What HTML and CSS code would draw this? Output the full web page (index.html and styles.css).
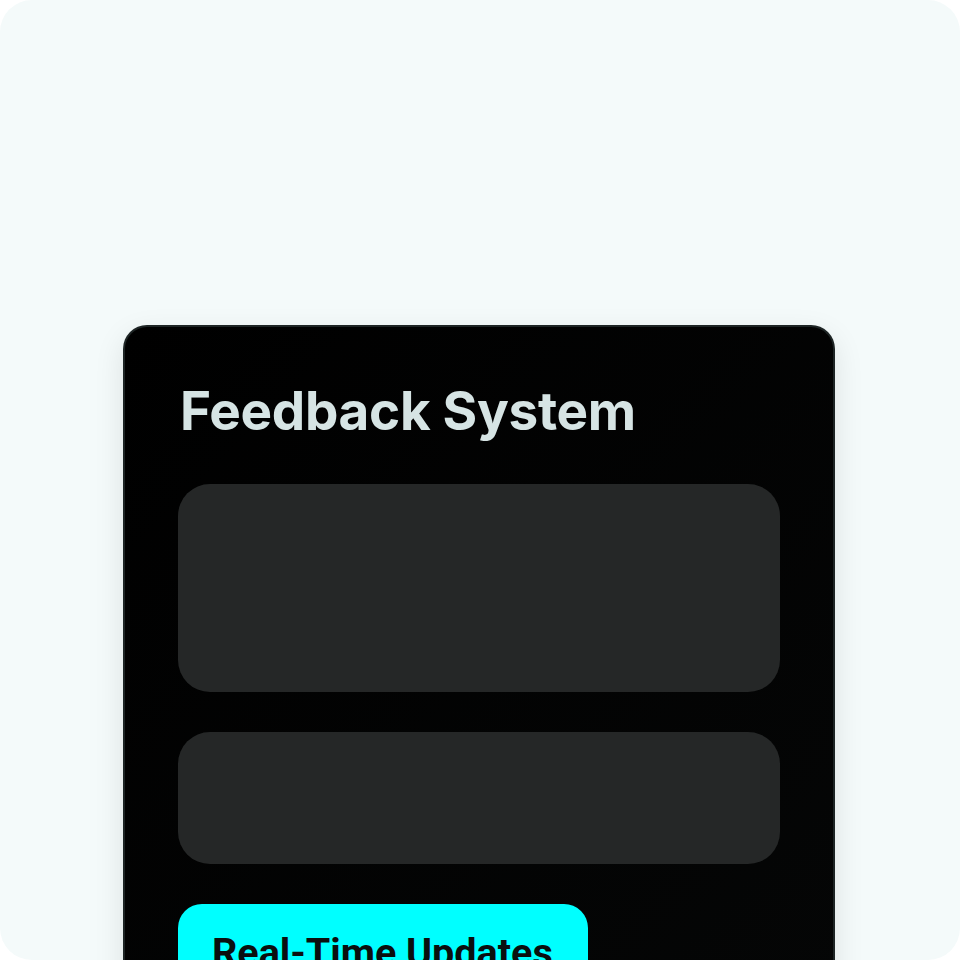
FILE: index.html
```html
<!DOCTYPE html>
<html lang="en">
<head>
<meta charset="utf-8">
<title>Feedback System</title>
<link rel="stylesheet" href="styles.css">
</head>
<body>
<div class="page">
  <section class="card">
    <h1 class="card-title">Feedback System</h1>
    <div class="panel panel-large"></div>
    <div class="panel panel-small"></div>
    <button class="update-btn">Real-Time Updates</button>
  </section>
</div>
</body>
</html>
```
FILE: styles.css
```css
html, body {
  margin: 0;
  padding: 0;
  background: #ffffff;
}
.page {
  width: 960px;
  height: 960px;
  box-sizing: border-box;
  background: #f4fafa;
  border-radius: 32px;
  overflow: hidden;
  padding-top: 325px;
  display: flex;
  justify-content: center;
  align-items: flex-start;
}
.card {
  width: 712px;
  box-sizing: border-box;
  margin-left: -2px;
  background: linear-gradient(135deg, #000000 0%, #050606 100%);
  border: 2px solid #1d2424;
  border-bottom: none;
  border-radius: 24px 24px 0 0;
  padding: 53px 53px 0 53px;
  display: flex;
  flex-direction: column;
  gap: 40px;
  box-shadow: 0 10px 30px rgba(0, 0, 0, 0.10);
  min-height: 700px;
}
.card-title {
  margin: 0 0 0 2px;
  font-family: Inter, "Liberation Sans", sans-serif;
  font-weight: 700;
  font-size: 53px;
  line-height: 1.2;
  letter-spacing: -0.3px;
  color: #d6e4e4;
}
.panel {
  background: #252727;
  border-radius: 32px;
}
.panel-large {
  height: 208px;
}
.panel-small {
  height: 132px;
}
.update-btn {
  align-self: flex-start;
  border: none;
  background: #00ffff;
  color: #0a0f0f;
  font-family: Roboto, "Liberation Sans", sans-serif;
  font-weight: 700;
  font-size: 39.5px;
  line-height: normal;
  padding: 25px 35px 25px 34px;
  border-radius: 24px;
}
```
